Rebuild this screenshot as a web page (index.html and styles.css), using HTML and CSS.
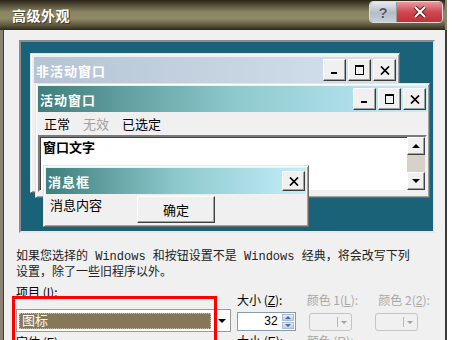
FILE: index.html
```html
<!DOCTYPE html>
<html lang="zh-CN">
<head>
    <meta charset="UTF-8">
    <title>高级外观</title>
    <link rel="stylesheet" href="styles.css">
</head>
<body>
    <div class="dialog">
        <div class="titlebar">
            <span class="title">高级外观</span>
            <div class="sys-btns">
                <span class="sys-help">?</span>
                <span class="sys-close">
                    <svg width="16" height="12" viewBox="0 0 16 12"><path d="M3 1 L13 11 M13 1 L3 11" stroke="#5a2020" stroke-width="4"/><path d="M3 1 L13 11 M13 1 L3 11" stroke="#fff" stroke-width="2"/></svg>
                </span>
            </div>
        </div>

        <div class="frame">
            <!-- 预览 -->
            <div class="preview">
                <div class="win win-inactive">
                    <div class="win-title inactive">
                        <span>非活动窗口</span>
                        <div class="caps">
                            <span class="cap"><svg width="10" height="10" viewBox="0 0 10 10"><rect x="1" y="7" width="6" height="2" fill="#000"/></svg></span>
                            <span class="cap"><svg width="11" height="10" viewBox="0 0 11 10"><rect x="1" y="0" width="9" height="2" fill="#000"/><rect x="1.5" y="1.5" width="8" height="8" fill="none" stroke="#000"/></svg></span>
                            <span class="cap cap-x"><svg width="10" height="9" viewBox="0 0 10 9"><path d="M1 0.5 L9 8.5 M9 0.5 L1 8.5" stroke="#000" stroke-width="1.7"/></svg></span>
                        </div>
                    </div>
                </div>

                <div class="win win-active">
                    <div class="win-title active">
                        <span>活动窗口</span>
                        <div class="caps">
                            <span class="cap"><svg width="10" height="10" viewBox="0 0 10 10"><rect x="1" y="7" width="6" height="2" fill="#000"/></svg></span>
                            <span class="cap"><svg width="11" height="10" viewBox="0 0 11 10"><rect x="1" y="0" width="9" height="2" fill="#000"/><rect x="1.5" y="1.5" width="8" height="8" fill="none" stroke="#000"/></svg></span>
                            <span class="cap cap-x"><svg width="10" height="9" viewBox="0 0 10 9"><path d="M1 0.5 L9 8.5 M9 0.5 L1 8.5" stroke="#000" stroke-width="1.7"/></svg></span>
                        </div>
                    </div>
                    <div class="menu">
                        <span>正常</span>
                        <span class="disabled">无效</span>
                        <span>已选定</span>
                    </div>
                    <div class="client">
                        <div class="client-text">窗口文字</div>
                        <div class="scrollbar">
                            <span class="sb-btn"><i class="arrow-up"></i></span>
                            <span class="sb-track"></span>
                            <span class="sb-btn"><i class="arrow-down"></i></span>
                        </div>
                    </div>
                </div>

                <div class="win msgbox">
                    <div class="win-title active">
                        <span>消息框</span>
                        <div class="caps">
                            <span class="cap cap-x"><svg width="10" height="9" viewBox="0 0 10 9"><path d="M1 0.5 L9 8.5 M9 0.5 L1 8.5" stroke="#000" stroke-width="1.7"/></svg></span>
                        </div>
                    </div>
                    <div class="msg-body">
                        <span>消息内容</span>
                        <span class="ok-btn">确定</span>
                    </div>
                </div>
            </div>

            <p class="note">如果您选择的<span class="latin"> Windows </span>和按钮设置不是<span class="latin"> Windows </span>经典，将会改写下列<br>设置，除了一些旧程序以外。</p>

            <!-- 项目设置 -->
            <div class="fields">
                <div class="col col-item">
                    <label>项目 (<u>I</u>):</label>
                    <div class="combo">
                        <span class="combo-sel">图标</span>
                        <i class="arrow-down"></i>
                    </div>
                    <label class="next">字体 (<u>F</u>):</label>
                </div>
                <div class="col col-size">
                    <label class="lbl-low">大小 (<u>Z</u>):</label>
                    <div class="spin">
                        <span class="spin-val">32</span>
                        <span class="spin-btns">
                            <span class="spin-btn"><i class="s-up"></i></span>
                            <span class="spin-btn"><i class="s-down"></i></span>
                        </span>
                    </div>
                    <label class="next">大小 (<u>E</u>):</label>
                </div>
                <div class="col col-color">
                    <label class="lbl-low off">颜色 1(<u>L</u>):</label>
                    <div class="color-combo"><span class="cc-sep"></span><i class="cc-arrow"></i></div>
                    <label class="next off">颜色 (<u>R</u>):</label>
                </div>
                <div class="col col-color2">
                    <label class="lbl-low off">颜色 2(<u>2</u>):</label>
                    <div class="color-combo"><span class="cc-sep"></span><i class="cc-arrow"></i></div>
                </div>
            </div>
        </div>

        <!-- 红框标注 -->
        <div class="mark"></div>
    </div>
</body>
</html>
```

FILE: styles.css
```css
* {
    box-sizing: border-box;
}

body {
    margin: 0;
    background-color: #fff;
    font-family: "Noto Sans CJK SC", "Liberation Sans", sans-serif;
    font-size: 12px;
    color: #000;
    overflow: hidden;
}

.dialog {
    position: relative;
    width: 447px;
    height: 340px;
    background-color: #8a8474;
    overflow: hidden;
}

/* 标题栏 */
.titlebar {
    height: 30px;
    width: 445px;
    display: flex;
    align-items: center;
    justify-content: space-between;
    padding: 0 2px 0 12px;
    background: linear-gradient(to bottom, #2a2418 0%, #4c4634 14%, #8a8662 40%, #8e8a66 62%, #5e5840 84%, #2e281a 100%);
}

.title {
    color: #fff;
    font-weight: bold;
    font-size: 14px;
    letter-spacing: 0.5px;
    text-shadow: 1px 1px 1px #3a3424;
}

.sys-btns {
    display: flex;
    align-self: flex-start;
    margin-top: 1px;
    border: 1px solid #ddd;
    border-radius: 4px;
    overflow: hidden;
}

.sys-help {
    width: 27px;
    height: 20px;
    display: flex;
    align-items: center;
    justify-content: center;
    background: linear-gradient(to bottom, #e4e8ee, #b4bcc6 55%, #c8d0d8);
    color: #556;
    font-family: "Liberation Sans", sans-serif;
    font-weight: bold;
    font-size: 15px;
    text-shadow: 0 0 1px #fff;
    border-right: 1px solid #999;
}

.sys-close {
    width: 45px;
    height: 20px;
    display: flex;
    align-items: center;
    justify-content: center;
    background: linear-gradient(to bottom, #e89aa0, #d04850 50%, #c03038);
}

.frame {
    margin-left: 3px;
    height: 310px;
    background-color: #f0f0f0;
    border-left: 1px solid #3c3c3c;
    border-right: 2px solid #3c3c3c;
    padding: 10px 0 0 12px;
}

/* 预览区 */
.preview {
    position: relative;
    margin-left: 3px;
    width: 416px;
    height: 193px;
    background-color: #1a6277;
    border: 2px solid;
    border-color: #8c8c8c #e8e8e8 #e8e8e8 #8c8c8c;
}

.win {
    position: absolute;
    background-color: #f0f0f0;
    border: 1px solid;
    border-color: #e4e4e4 #6a6a6a #6a6a6a #e4e4e4;
    box-shadow: inset 1px 1px #fff, inset -1px -1px #a0a0a0;
    padding: 2px;
}

.win-inactive {
    left: 9px;
    top: 11px;
    width: 370px;
    height: 140px;
}

.win-active {
    left: 14px;
    top: 41px;
    width: 395px;
    height: 115px;
}

.msgbox {
    left: 22px;
    top: 123px;
    width: 266px;
    height: 62px;
}

.win-title {
    height: 26px;
    display: flex;
    align-items: center;
    justify-content: space-between;
    padding: 0 1px 0 2px;
    color: #fff;
    font-weight: bold;
    font-size: 13px;
    letter-spacing: 1px;
}

.win-inactive .win-title {
    margin: 1px 0 0 1px;
}

.inactive {
    background: linear-gradient(to right, #b4c4d4, #d6e2ee);
}

.active {
    background: linear-gradient(to right, #3e7e7c, #8cc8cc 50%, #c4eefa);
}

.caps {
    display: flex;
    gap: 2px;
}

.cap {
    width: 23px;
    height: 22px;
    display: flex;
    align-items: center;
    justify-content: center;
    background-color: #f0f0f0;
    border: 1px solid;
    border-color: #fff #3c3c3c #3c3c3c #fff;
    box-shadow: inset -1px -1px #a0a0a0;
}

.msgbox .cap {
    height: 20px;
}

/* 菜单 */
.menu {
    height: 22px;
    display: flex;
    align-items: center;
    gap: 13px;
    padding-left: 6px;
    font-size: 13px;
}

.disabled {
    color: #a0a0a0;
}

.client {
    display: flex;
    height: 57px;
    margin-top: 1px;
    background-color: #fff;
    border: 2px solid;
    border-color: #7a7a7a #f0f0f0 #f0f0f0 #7a7a7a;
    box-shadow: inset 1px 1px #404040;
}

.client-text {
    flex: 1;
    padding: 2px 0 0 3px;
    font-weight: bold;
    font-size: 13px;
    line-height: 16px;
}

.scrollbar {
    width: 18px;
    display: flex;
    flex-direction: column;
}

.sb-btn {
    height: 18px;
    display: flex;
    align-items: center;
    justify-content: center;
    background-color: #f0f0f0;
    border: 1px solid;
    border-color: #fff #404040 #404040 #fff;
    box-shadow: inset -1px -1px #a0a0a0;
}

.sb-track {
    flex: 1;
    background-color: #d6d2ca;
}

.arrow-up {
    width: 0;
    height: 0;
    border-left: 4px solid transparent;
    border-right: 4px solid transparent;
    border-bottom: 4px solid #000;
}

.arrow-down {
    width: 0;
    height: 0;
    border-left: 4px solid transparent;
    border-right: 4px solid transparent;
    border-top: 4px solid #000;
}

/* 消息框 */
.msg-body {
    display: flex;
    align-items: flex-start;
    padding: 2px 0 0 4px;
    font-size: 13px;
}

.msg-body span:first-child {
    line-height: 18px;
}

.ok-btn {
    width: 78px;
    height: 27px;
    margin-left: 35px;
    display: flex;
    align-items: center;
    justify-content: center;
    background-color: #f0f0f0;
    border: 1px solid;
    border-color: #fff #404040 #404040 #fff;
    box-shadow: inset -1px -1px #a0a0a0;
}

/* 说明文字 */
.note {
    margin: 15px 0 0;
    line-height: 13px;
    font-size: 12px;
    white-space: nowrap;
    color: #222;
}

.latin {
    font-family: "Liberation Mono", monospace;
    font-size: 12px;
}

/* 项目设置 */
.fields {
    display: flex;
    margin-top: 8px;
}

.col label {
    display: block;
    height: 14px;
    line-height: 14px;
    font-size: 12px;
    white-space: nowrap;
}

u {
    font-family: "Liberation Sans", sans-serif;
}

.lbl-low {
    margin-top: 8px;
}

.off {
    color: #a8a8a8;
}

.col-item {
    width: 216px;
}

.col-size {
    width: 59px;
    margin-left: 6px;
}

.col-color {
    width: 69px;
    margin-left: 11px;
}

.col-color2 {
    width: 70px;
}

.col-color2 label {
    padding-left: 3px;
}

.combo {
    margin-top: 10px;
    height: 23px;
    display: flex;
    align-items: center;
    background-color: #fff;
    border: 1px solid #9a9a9a;
    padding: 0 4px 0 2px;
}

.combo-sel {
    flex: 1;
    height: 16px;
    line-height: 14px;
    padding-left: 3px;
    background-color: #86775a;
    color: #fff;
    font-size: 13px;
    outline: 1px dotted #c8c0a8;
    outline-offset: -1px;
    margin-right: 7px;
}

.next {
    margin-top: 3px;
}

.spin {
    margin-top: 5px;
    height: 19px;
    display: flex;
    background-color: #fff;
    border: 1px solid #8a9aae;
}

.spin-val {
    flex: 1;
    text-align: right;
    padding-right: 3px;
    font-family: "Liberation Sans", sans-serif;
    font-size: 12px;
    line-height: 17px;
}

.spin-btns {
    width: 14px;
    display: flex;
    flex-direction: column;
    gap: 1px;
    padding: 1px;
}

.spin-btn {
    flex: 1;
    display: flex;
    align-items: center;
    justify-content: center;
    background: linear-gradient(to bottom, #e6eef8, #bccde6);
    border: 1px solid #a8bcd8;
}

.s-up {
    border-left: 3px solid transparent;
    border-right: 3px solid transparent;
    border-bottom: 3px solid #4a66a0;
}

.s-down {
    border-left: 3px solid transparent;
    border-right: 3px solid transparent;
    border-top: 3px solid #4a66a0;
}

.color-combo {
    margin-top: 6px;
    width: 43px;
    height: 18px;
    display: flex;
    align-items: center;
    justify-content: flex-end;
    border: 1px solid #c4c4c4;
    border-radius: 3px;
    padding-right: 4px;
}

.col-color .color-combo {
    margin-left: 2px;
}

.cc-sep {
    width: 1px;
    height: 10px;
    background-color: #b8b8b8;
    margin-right: 3px;
}

.cc-arrow {
    border-left: 3px solid transparent;
    border-right: 3px solid transparent;
    border-top: 3px solid #a0a0a0;
}

/* 红色标注框 */
.mark {
    position: absolute;
    left: 12px;
    top: 296px;
    width: 205px;
    height: 60px;
    border: 3px solid #f00;
}
```
